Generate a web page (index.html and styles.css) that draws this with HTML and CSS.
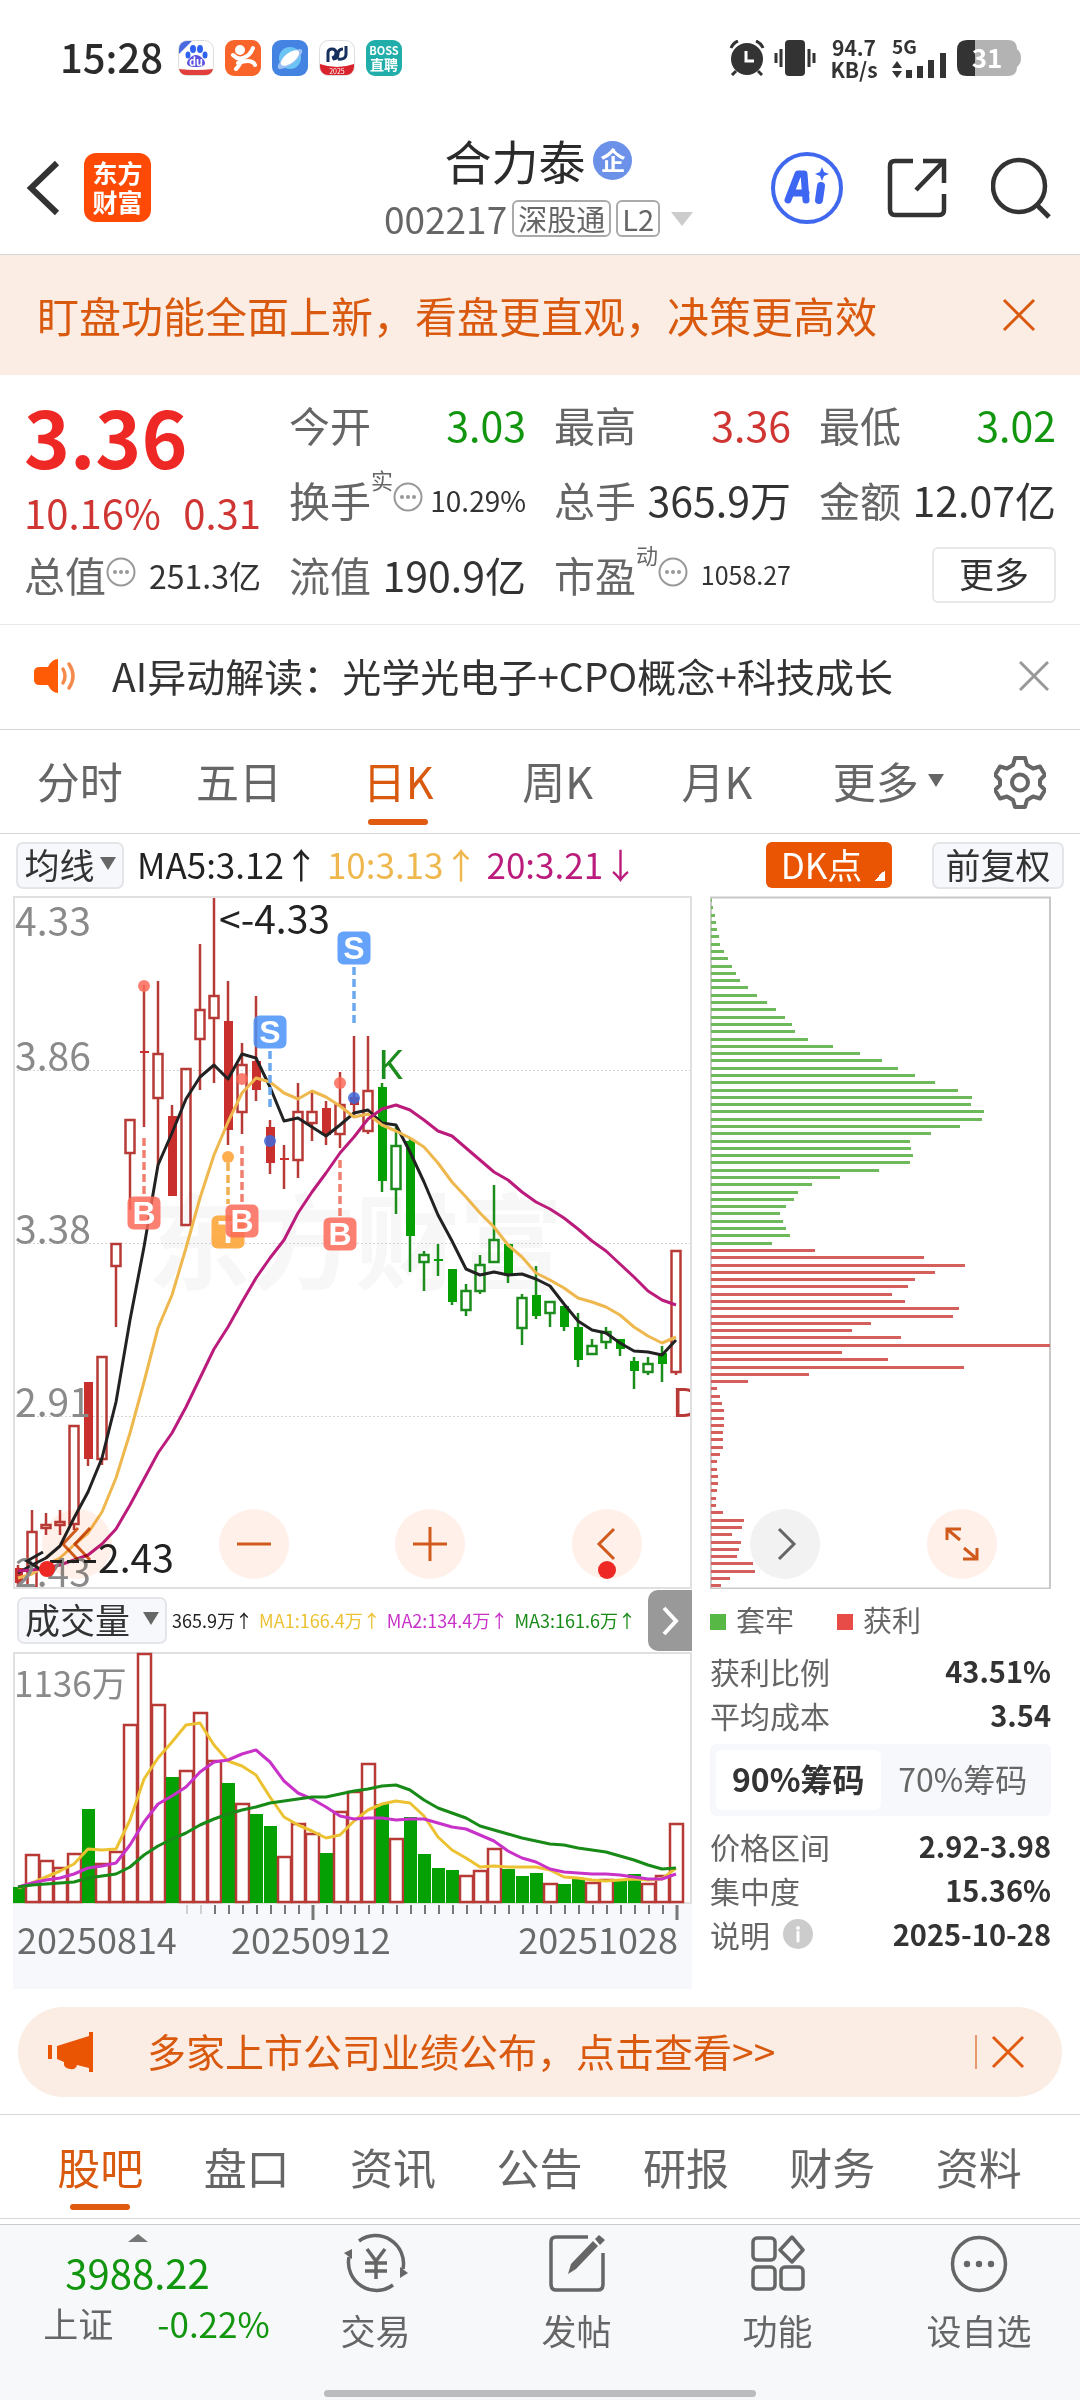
FILE: index.html
```html
<!DOCTYPE html>
<html lang="zh-CN">
<head>
<meta charset="utf-8">
<meta name="viewport" content="width=device-width, initial-scale=1">
<title>合力泰 002217</title>
<link rel="stylesheet" href="styles.css">
</head>
<body>
<div class="status">
  <span class="clock">15:28</span>
  <div class="status-apps">
    <svg viewBox="0 0 36 36"><rect x=".5" y=".5" width="35" height="35" rx="9" fill="#fff" stroke="#ddd"/><path d="M1 14V9a8 8 0 0 1 8-8h5z" fill="#4a6ae0"/><g fill="#2f62ee"><ellipse cx="15" cy="9" rx="3" ry="4"/><ellipse cx="22" cy="9" rx="3" ry="4"/><ellipse cx="10" cy="15" rx="2.500" ry="3.500"/><ellipse cx="27" cy="15" rx="2.500" ry="3.500"/></g><path d="M18 15c4 0 9 5 9 8s-4 4-9 4-9-1-9-4 5-8 9-8z" fill="#5b4fe0"/><text x="18" y="26" text-anchor="middle" class="t11 w">du</text><path d="M1 29q17 2 34 0a8 8 0 0 1-8 6H9a8 8 0 0 1-8-6z" fill="#e2403c"/></svg>
    <svg viewBox="0 0 36 36"><rect width="36" height="36" rx="9" fill="#f9642a"/><circle cx="15" cy="10" r="5" fill="#fff"/><path d="M8 15q5 5 10 3 7-2 10-10M17 18q-1 6-6 11M13 23q14-5 17 2" fill="none" stroke="#fff" stroke-width="4" stroke-linecap="round"/></svg>
    <svg viewBox="0 0 36 36"><rect width="36" height="36" rx="9" fill="#4583e2"/><circle cx="18" cy="18" r="11" fill="#6cc4f4"/><ellipse cx="18" cy="19" rx="5" ry="15" transform="rotate(52 18 19)" fill="#9cc0f4"/><ellipse cx="18" cy="18" rx="5" ry="11" transform="rotate(52 18 18)" fill="#fff"/></svg>
    <svg viewBox="0 0 36 36"><rect x=".5" y=".5" width="35" height="35" rx="9" fill="#fff" stroke="#ddd"/><path d="M9 22V13q0-4 4-4t4 4-4 5M14 19q5 0 5-5t5-5M19 19q8 1 8-5V6" fill="none" stroke="#18305e" stroke-width="3"/><path d="M1 24q17 6 34 0v3a8 8 0 0 1-8 8H9a8 8 0 0 1-8-8z" fill="#d8222c"/><text x="18" y="34" text-anchor="middle" class="t7 w">2025</text></svg>
    <svg viewBox="0 0 36 36"><rect width="36" height="36" rx="9" fill="#21aeaa"/><text x="18" y="15" text-anchor="middle" class="t11 w">BOSS</text><text x="18" y="30" text-anchor="middle" class="t14 w">直聘</text></svg>
  </div>
  <div class="status-right">
    <svg class="s36" viewBox="0 0 36 36"><circle cx="18" cy="19" r="16" fill="#333"/><path d="M17 11v10h8" fill="none" stroke="#fff" stroke-width="3"/><path d="M2 8q2-5 7-7M34 8q-2-5-7-7M7 31l-4 4M29 31l4 4" fill="none" stroke="#333" stroke-width="3"/></svg>
    <svg class="s42" viewBox="0 0 42 36"><rect x="11" width="20" height="36" rx="4" fill="#333"/><path d="M7 9v18M35 9v18M2 13v10M40 13v10" stroke="#333" stroke-width="3"/></svg>
    <span class="speed">94.7<br>KB/s</span>
    <svg class="signal" viewBox="0 0 56 44"><text x="0" y="18" class="t18 d">5G</text><path d="M0 32l5-7 5 7zM0 35l5 7 5-7z" fill="#333"/><path d="M17 42V34M28 42V30M39 42V24M51 42V17" stroke="#333" stroke-width="6"/></svg>
    <svg class="battery" viewBox="0 0 64 36"><path d="M10 0h41q9 0 9 9 4 3 4 9t-4 9q0 9-9 9H18V0z" fill="#b3b3b3"/><path d="M10 0h8v36h-8q-10 0-10-10V10Q0 0 10 0z" fill="#333"/><text x="30" y="28" text-anchor="middle" class="t26 w">31</text></svg>
  </div>
</div>

<header class="header">
  <div class="header-left">
    <button class="ghost" aria-label="返回"><svg width="34" height="56" viewBox="0 0 34 56"><path d="M31 3L5 28l26 25" fill="none" stroke="#333" stroke-width="6"/></svg></button>
    <a class="brand" href="#">东方<br>财富</a>
  </div>
  <div class="header-mid">
    <h1 class="stock-name">合力泰<span class="corp">企</span></h1>
    <div class="stock-code">002217<span class="tag">深股通</span><span class="tag">L2</span><svg width="22" height="14" viewBox="0 0 22 14"><path d="M0 0h22L11 14z" fill="#ccc"/></svg></div>
  </div>
  <div class="header-right">
    <button class="ghost" aria-label="Ai"><svg width="72" height="72" viewBox="0 0 72 72"><circle cx="36" cy="36" r="34" fill="none" stroke="#4068ee" stroke-width="4"/><path d="M17 48L27 22h6l2 26M21 41h14" fill="none" stroke="#3d66f2" stroke-width="7" stroke-linecap="round" stroke-linejoin="round"/><path d="M50 34L48 48" stroke="#3d66f2" stroke-width="8" stroke-linecap="round"/><path d="M51 15l2 5 5 2-5 2-2 5-2-5-5-2 5-2z" fill="#3d66f2"/></svg></button>
    <button class="ghost" aria-label="分享"><svg width="60" height="60" viewBox="0 0 60 60"><path d="M26 3H8Q3 3 3 8v43q0 6 5 6h44q5 0 5-5V36M36 3h21v22M56 4L29 32" fill="none" stroke="#333" stroke-width="4.500"/></svg></button>
    <button class="ghost" aria-label="搜索"><svg width="60" height="62" viewBox="0 0 60 62"><circle cx="28" cy="29" r="26" fill="none" stroke="#333" stroke-width="4.500"/><path d="M46 48l12 12" stroke="#333" stroke-width="5"/></svg></button>
  </div>
</header>

<div class="promo">
  <a class="promo-text" href="#">盯盘功能全面上新，看盘更直观，决策更高效</a>
  <button class="ghost" aria-label="关闭"><svg width="34" height="34" viewBox="0 0 34 34"><path d="M2 2l30 30M32 2L2 32" stroke="#d9590f" stroke-width="3"/></svg></button>
</div>

<section class="quote">
  <div class="price">
    <strong class="price-now">3.36</strong>
    <div class="price-diff"><span>10.16%</span><span>0.31</span></div>
  </div>
  <div class="cell"><span class="label">今开</span><span class="val green">3.03</span></div>
  <div class="cell"><span class="label">最高</span><span class="val red">3.36</span></div>
  <div class="cell"><span class="label">最低</span><span class="val green">3.02</span></div>
  <div class="cell"><span class="label">换手</span><span class="sup">实</span><svg class="more-dot"><use href="#dots"/></svg><span class="val v28">10.29%</span></div>
  <div class="cell"><span class="label">总手</span><span class="val">365.9万</span></div>
  <div class="cell"><span class="label">金额</span><span class="val">12.07亿</span></div>
  <div class="cell"><span class="label">总值</span><svg class="more-dot"><use href="#dots"/></svg><span class="val v32">251.3亿</span></div>
  <div class="cell"><span class="label">流值</span><span class="val">190.9亿</span></div>
  <div class="cell"><span class="label">市盈</span><span class="sup">动</span><svg class="more-dot"><use href="#dots"/></svg><span class="val v24">1058.27</span></div>
  <div class="cell"><button class="more-btn">更多</button></div>
  <svg width="0" height="0" class="defs"><symbol id="dots" viewBox="0 0 30 30"><circle cx="15" cy="15" r="13.500" fill="none" stroke="#999" stroke-width="2"/><circle cx="9" cy="15" r="2" fill="#999"/><circle cx="15" cy="15" r="2" fill="#999"/><circle cx="21" cy="15" r="2" fill="#999"/></symbol></svg>
</section>

<div class="insight">
  <svg width="46" height="36" viewBox="0 0 46 36"><path d="M24 1v34q-6 0-10-8H6q-6 0-6-5v-8q0-5 6-5h8q4-8 10-8z" fill="#ff5a05"/><path d="M29 11q4 7 0 14M35 6q8 12 0 24" fill="none" stroke="#f58a4c" stroke-width="3.500" stroke-linecap="round"/></svg>
  <a class="insight-text" href="#">AI异动解读：光学光电子+CPO概念+科技成长</a>
  <button class="ghost" aria-label="关闭"><svg width="30" height="30" viewBox="0 0 30 30"><path d="M1 1l28 28M29 1L1 29" stroke="#999" stroke-width="3"/></svg></button>
</div>

<nav class="periods">
  <a href="#">分时</a><a href="#">五日</a><a href="#" class="on">日K</a><a href="#">周K</a><a href="#">月K</a>
  <a href="#" class="wide">更多<svg width="16" height="13" viewBox="0 0 16 13"><path d="M0 0h16L8 13z" fill="#666"/></svg></a>
  <button class="ghost gear" aria-label="设置"><svg width="52" height="54" viewBox="0 0 52 54"><path d="M21 3h10l2 7 6 3.500 7-2 5 8.500-5 5v5l5 5-5 8.500-7-2-6 3.500-2 7H21l-2-7-6-3.500-7 2L1 35l5-5v-5l-5-5 5-8.500 7 2L19 10z" fill="none" stroke="#666" stroke-width="4" stroke-linejoin="round"/><circle cx="26" cy="27.500" r="8" fill="none" stroke="#666" stroke-width="4"/></svg></button>
</nav>

<div class="tools">
  <button class="chip ma-btn">均线<svg width="16" height="13" viewBox="0 0 16 13"><path d="M0 0h16L8 13z" fill="#666"/></svg></button>
  <div class="ma"><span>MA5:3.12↑</span><span class="gold">10:3.13↑</span><span class="plum">20:3.21↓</span></div>
  <button class="dk">DK点</button>
  <button class="chip adj-btn">前复权</button>
</div>

<main class="charts">
  <div class="col">
    <div class="panel">
      <svg id="kline" class="plot" viewBox="13 896 679 693"></svg>
      <div class="pad pad-k">
        <button class="round" aria-label="最早"><svg viewBox="0 0 34 34"><path d="M18 1L3 17l15 16M30 1L15 17l15 16" /></svg></button>
        <button class="round" aria-label="缩小"><svg viewBox="0 0 34 34"><path d="M0 17h34"/></svg></button>
        <button class="round" aria-label="放大"><svg viewBox="0 0 34 34"><path d="M0 17h34M17 0v34"/></svg></button>
        <button class="round dotted" aria-label="向左"><svg viewBox="0 0 34 34"><path d="M24 2L9 17l15 15"/></svg></button>
      </div>
    </div>
    <div class="vol-head">
      <button class="chip vol-btn">成交量<svg width="16" height="13" viewBox="0 0 16 13"><path d="M0 0h16L8 13z" fill="#666"/></svg></button>
      <div class="vol-ma"><span>365.9万↑</span><span class="v-gold">MA1:166.4万↑</span><span class="v-purple">MA2:134.4万↑</span><span class="v-green">MA3:161.6万↑</span></div>
      <button class="next" aria-label="下一个"><svg width="18" height="30" viewBox="0 0 18 30"><path d="M3 2l12 13L3 28" fill="none" stroke="#fff" stroke-width="4"/></svg></button>
    </div>
    <svg id="volume" class="plot" viewBox="13 1652 679 337"></svg>
  </div>
  <div class="col">
    <div class="panel">
      <svg id="chips" class="plot" viewBox="710 896 341 693"></svg>
      <div class="pad pad-c">
        <button class="round grey" aria-label="向右"><svg viewBox="0 0 34 34"><path d="M11 2l15 15-15 15"/></svg></button>
        <button class="round" aria-label="全屏"><svg viewBox="0 0 34 34"><path d="M2 13V2h14M2 2l13 11M32 21v11H18M32 32L19 21"/></svg></button>
      </div>
    </div>
    <div class="legend"><span class="key"><i class="sq g"></i>套牢</span><span class="key"><i class="sq r"></i>获利</span></div>
    <div class="fact"><span>获利比例</span><b>43.51%</b></div>
    <div class="fact"><span>平均成本</span><b>3.54</b></div>
    <div class="seg"><button class="seg-on">90%筹码</button><button>70%筹码</button></div>
    <div class="fact"><span>价格区间</span><b>2.92-3.98</b></div>
    <div class="fact"><span>集中度</span><b>15.36%</b></div>
    <div class="fact"><span>说明<svg class="info" viewBox="0 0 30 30"><circle cx="15" cy="15" r="15" fill="#ccc"/><circle cx="15" cy="9" r="2" fill="#fff"/><path d="M15 13v9" stroke="#fff" stroke-width="3" stroke-linecap="round"/></svg></span><b>2025-10-28</b></div>
  </div>
</main>

<div class="notice">
  <svg width="46" height="40" viewBox="0 0 46 40"><path d="M2 13v14" stroke="#ea5504" stroke-width="4"/><path d="M9 14L41 4V0h4v40h-4v-4l-12-3q-1 5-7 4-7-1-6-7l-7-3z" fill="#ea5504"/></svg>
  <a class="notice-text" href="#">多家上市公司业绩公布，点击查看&gt;&gt;</a>
  <button class="ghost notice-x" aria-label="关闭"><svg width="34" height="34" viewBox="0 0 34 34"><path d="M2 2l30 30M32 2L2 32" stroke="#e05a10" stroke-width="3"/></svg></button>
</div>

<nav class="sections">
  <a href="#" class="on">股吧</a><a href="#">盘口</a><a href="#">资讯</a><a href="#">公告</a><a href="#">研报</a><a href="#">财务</a><a href="#">资料</a>
</nav>

<footer class="dock">
  <a class="index" href="#">
    <svg width="20" height="8" viewBox="0 0 20 8"><path d="M0 8h20L10 0z" fill="#777"/></svg>
    <span class="index-val">3988.22</span>
    <span class="index-row"><span>上证</span><span class="green">-0.22%</span></span>
  </a>
  <a class="act" href="#"><svg width="66" height="60" viewBox="0 0 66 60"><path d="M16 8A28 28 0 0 1 60 36M50 52A28 28 0 0 1 6 24" fill="none" stroke="#666" stroke-width="3.500"/><path d="M1 20l8-4v10zM65 40l-8 5V34z" fill="#666"/><path d="M24 16l9 12 9-12M22 30h22M22 38h22M33 28v18" fill="none" stroke="#666" stroke-width="3.500"/></svg>交易</a>
  <a class="act" href="#"><svg width="58" height="60" viewBox="0 0 58 60"><path d="M40 4H8Q3 4 3 9v42q0 6 5 6h42q5 0 5-6V20" fill="none" stroke="#666" stroke-width="3.500"/><path d="M20 41l3-10L45 8l5 5-22 23zM47 6l4-4 6 5-5 5z" fill="#666"/></svg>发帖</a>
  <a class="act" href="#"><svg width="54" height="60" viewBox="0 0 54 60"><g fill="none" stroke="#666" stroke-width="3.500"><rect x="2" y="5" width="22" height="22" rx="4"/><rect x="2" y="34" width="22" height="22" rx="4"/><rect x="30" y="34" width="22" height="22" rx="4"/><path d="M41 4l11 13-11 12-12-12z" stroke-linejoin="round"/></g></svg>功能</a>
  <a class="act" href="#"><svg width="58" height="60" viewBox="0 0 58 60"><circle cx="29" cy="31" r="26.500" fill="none" stroke="#666" stroke-width="3.500"/><circle cx="17" cy="31" r="3.200" fill="#666"/><circle cx="29" cy="31" r="3.200" fill="#666"/><circle cx="41" cy="31" r="3.200" fill="#666"/></svg>设自选</a>
  <div class="home-bar"></div>
</footer>
<script src="charts.js"></script>
</body>
</html>
```
FILE: styles.css
```css
* { box-sizing: border-box; }
body {
  margin: 0;
  background: #fff;
  color: #333;
  font-family: "Noto Sans CJK SC", sans-serif;
  font-size: 35px;
  line-height: 1;
}
svg { display: block; flex: none; }
a { color: inherit; text-decoration: none; }
button {
  margin: 0;
  padding: 0;
  border: 0;
  background: none;
  color: inherit;
  font: inherit;
  white-space: nowrap;
  cursor: pointer;
}
.ghost { display: flex; align-items: center; justify-content: center; flex: none; }
.green { color: #12960f; }
.red { color: #cf3532; }
.defs { position: absolute; }

/* status bar */
.status { display: flex; align-items: center; height: 115px; padding: 0 59px 0 60px; }
.clock { width: 118px; padding-bottom: 3px; font-size: 40px; font-weight: 500; color: #2b2b2b; }
.status-apps { display: flex; gap: 11px; }
.status-apps svg { width: 36px; height: 36px; }
.status-right { display: flex; align-items: center; gap: 9px; margin-left: auto; }
.s36 { width: 36px; height: 36px; }
.s42 { width: 42px; height: 36px; }
.speed { width: 58px; font-size: 21px; line-height: 22px; font-weight: 700; text-align: center; }
.signal { width: 56px; height: 44px; overflow: visible; }
.battery { width: 64px; height: 36px; overflow: visible; }
.t7 { font-size: 7px; }
.t11 { font-size: 11px; font-weight: 700; }
.t14 { font-size: 14px; font-weight: 700; }
.t18 { font-size: 19px; font-weight: 700; }
.t26 { font-size: 26px; font-weight: 700; }
.w { fill: #fff; }
.d { fill: #333; }

/* header */
.header {
  display: grid;
  grid-template-columns: 1fr auto 1fr;
  align-items: center;
  height: 140px;
  padding: 6px 29px 0 26px;
  border-bottom: 1px solid #d6d6d6;
}
.header-left { display: flex; align-items: center; gap: 24px; }
.header-right { display: flex; align-items: center; justify-content: flex-end; gap: 44px; }
.brand {
  width: 67px;
  padding: 5px 0 6px;
  border-radius: 12px;
  background: #ff4a05;
  color: #fff;
  font-size: 25px;
  font-weight: 700;
  line-height: 29px;
  text-align: center;
}
.header-mid { display: flex; flex-direction: column; align-items: center; gap: 18px; }
.stock-name { display: flex; align-items: center; gap: 8px; margin: 0; font-size: 47px; font-weight: 400; line-height: 44px; color: #2b2b2b; }
.corp {
  width: 39px;
  height: 39px;
  border-radius: 50%;
  background: #6b92e8;
  color: #fff;
  font-size: 25px;
  font-weight: 700;
  line-height: 36px;
  text-align: center;
}
.stock-code { display: flex; align-items: center; gap: 5px; font-size: 37px; color: #666; }
.tag { padding: 0 4px; border: 2px solid #aaa; border-radius: 6px; font-size: 29px; line-height: 33px; }
.stock-code svg { margin-left: 6px; }

/* promo */
.promo { display: flex; align-items: center; justify-content: space-between; height: 120px; padding: 0 44px 1px 37px; background: #fcede4; }
.promo-text { font-size: 42px; color: #d9590f; }

/* quote */
.quote {
  display: grid;
  grid-template-columns: repeat(4, 1fr);
  grid-auto-rows: 75px;
  column-gap: 28px;
  padding: 12px 24px 12px 24px;
  border-bottom: 1px solid #eaeaea;
}
.price { grid-row: span 2; display: flex; flex-direction: column; gap: 15px; padding-top: 9px; }
.price-now { font-size: 78px; color: #ee2824; }
.price-diff { display: flex; justify-content: space-between; font-size: 40px; line-height: 46px; color: #cf3532; }
.cell { display: flex; align-items: center; white-space: nowrap; }
.label { font-size: 41px; color: #666; }
.val { margin-left: auto; font-size: 41px; }
.v32 { font-size: 32px; }
.v28 { font-size: 28px; }
.v24 { font-size: 25px; }
.sup { margin-bottom: 42px; font-size: 22px; color: #666; }
.more-dot { width: 30px; height: 30px; margin-bottom: 6px; }
.more-btn { margin-left: auto; width: 124px; height: 56px; padding-bottom: 4px; border: 2px solid #e8e8e8; border-radius: 6px; font-size: 35px; }

/* insight */
.insight { display: flex; align-items: center; height: 105px; padding: 0 31px 2px 34px; border-bottom: 1px solid #d6d6d6; }
.insight-text { flex: 1; padding: 0 0 2px 32px; font-size: 39px; }

/* period tabs */
.periods { display: flex; height: 104px; padding-right: 20px; border-bottom: 1px solid #d6d6d6; color: #666; font-size: 43px; }
.periods a { display: flex; align-items: center; justify-content: center; flex: 159 0 0; padding-bottom: 2px; }
.periods .wide { flex: 183 0 0; gap: 9px; }
.gear { flex: 80 0 0; }
.periods .on, .sections .on { position: relative; color: #d9590f; }
.on::after {
  content: "";
  position: absolute;
  bottom: 8px;
  left: 50%;
  width: 60px;
  height: 6px;
  margin-left: -30px;
  border-radius: 3px;
  background: #e05a10;
}

/* chart toolbar */
.tools { display: flex; align-items: center; height: 62px; padding: 0 16px; }
.chip {
  display: flex;
  align-items: center;
  justify-content: center;
  gap: 5px;
  flex: none;
  height: 47px;
  padding-bottom: 4px;
  border: 2px solid #e3e5e9;
  border-radius: 7px;
  background: #f7f8fb;
}
.ma-btn { width: 108px; }
.adj-btn { width: 132px; }
.ma { display: flex; gap: 8px; flex: 1; padding: 0 0 3px 13px; color: #222; white-space: nowrap; }
.gold { color: #efb84e; }
.plum { color: #bb1c7c; }
.dk {
  width: 126px;
  height: 46px;
  margin-right: 40px;
  padding: 0 15px 4px 0;
  border-radius: 6px;
  background: linear-gradient(135deg, transparent 50%, #fff 50%) right 7px bottom 7px / 11px 11px no-repeat, #ea5504;
  color: #fff;
}

/* charts */
.charts { display: grid; grid-template-columns: 679fr 341fr; column-gap: 18px; padding: 0 29px 0 13px; }
.panel { position: relative; }
.plot { width: 100%; height: auto; }
.pad { position: absolute; bottom: 10px; display: flex; justify-content: space-between; }
.pad-k { left: 29px; right: 50px; mix-blend-mode: multiply; }
.pad-c { left: 40px; right: 54px; }
.round { position: relative; display: flex; align-items: center; justify-content: center; width: 70px; height: 70px; border-radius: 50%; background: #fff0e9; }
.round svg { width: 34px; height: 34px; fill: none; stroke: #d05a1c; stroke-width: 3; }
.round.grey { background: #f2f2f2; }
.round.grey svg { stroke: #666; }
.dotted::after { content: ""; position: absolute; bottom: 0; left: 26px; width: 18px; height: 18px; border-radius: 50%; background: #ee2824; }

.vol-head { display: flex; align-items: center; height: 63px; padding-left: 4px; }
.vol-btn { width: 150px; gap: 13px; }
.vol-ma { display: flex; justify-content: space-between; flex: 1; padding: 0 12px 2px 5px; font-size: 18px; white-space: nowrap; color: #222; }
.v-gold { color: #ecc232; }
.v-purple { color: #c832c8; }
.v-green { color: #188a18; }
.next { display: flex; align-items: center; justify-content: center; flex: none; width: 44px; height: 61px; border-radius: 10px 0 0 10px; background: #999; }

.grid { stroke: #d4d4d4; stroke-width: 1; stroke-dasharray: 2 2; }
.axis { font-size: 39px; fill: #8a8a8a; }
.axis-small { font-size: 35px; fill: #8a8a8a; }
.mark { font-size: 39px; fill: #222; }
.date { font-size: 36px; fill: #6a6a6a; }
.watermark { font-size: 104px; font-weight: 700; fill: #f7f7f7; }
.flag { font-family: "Liberation Sans", sans-serif; font-size: 32px; font-weight: 700; fill: #fff; text-anchor: middle; }
.signal-text { font-family: "Noto Sans", sans-serif; font-size: 40px; }

.legend { display: flex; gap: 43px; padding-top: 16px; height: 61px; font-size: 29px; color: #666; }
.key { display: flex; gap: 10px; }
.sq { width: 16px; height: 16px; margin-top: 9px; }
.sq.g { background: #58b845; }
.sq.r { background: #e84c48; }
.fact { display: flex; align-items: center; justify-content: space-between; height: 44px; padding-bottom: 3px; font-size: 30px; color: #666; }
.fact span { display: flex; align-items: center; gap: 13px; }
.fact b { font-size: 29px; color: #333; }
.info { width: 30px; height: 30px; }
.seg { display: flex; height: 72px; margin: 6px 0 9px; padding: 6px; border-radius: 6px; background: #f7f8fb; font-size: 32px; color: #666; }
.seg button { flex: 1; padding-bottom: 4px; border-radius: 6px; }
.seg .seg-on { background: #fff; color: #333; font-weight: 700; }

/* notice */
.notice { display: flex; align-items: center; height: 90px; margin: 18px 18px 17px; padding: 0 37px 0 30px; border-radius: 45px; background: #fcede4; color: #d9590f; }
.notice-text { flex: 1; padding: 0 0 4px 53px; font-size: 39px; }
.notice-x { padding-left: 14px; border-left: 2px solid #e5986b; }

/* section tabs */
.sections { display: flex; height: 105px; padding: 0 28px 0 27px; border-top: 1px solid #d6d6d6; border-bottom: 1px solid #d6d6d6; color: #666; font-size: 43px; }
.sections a { display: flex; align-items: center; justify-content: center; flex: 1; }

/* dock */
.dock {
  display: grid;
  grid-template-columns: 275fr 201fr 201fr 201fr 202fr;
  height: 176px;
  margin-top: 5px;
  border-top: 1px solid #ccc;
  background: #f7f8fa;
  color: #666;
  position: relative;
}
.index { display: flex; flex-direction: column; align-items: center; padding-top: 9px; }
.index-val { margin: 9px 0 5px; font-size: 40px; line-height: 42px; color: #12960f; }
.index-row { display: flex; gap: 44px; padding-left: 38px; line-height: 50px; }
.act { display: flex; flex-direction: column; align-items: center; padding-top: 8px; gap: 19px; }
.home-bar { position: absolute; bottom: 3px; left: 30%; right: 30%; height: 7px; border-radius: 4px; background: #bbbcbe; }
```
FILE: charts.js
```js
var RED = '#b83a36', SOLID = '#c92f2d', GREEN = '#1c8c1c', FILL = '#04a004';
var COUNT = 48, STEP = 14, START = 18;

// kind, high, body top, body bottom, low (r/g hollow, R/G filled)
var candles = [
  ['R',1565,1568,1583,1590],['r',1510,1531,1587,1587],['r',1513,1524,1528,1535],['r',1510,1521,1525,1535],
  ['r',1425,1425,1524,1530],['R',1382,1382,1459,1466],['r',1356,1356,1459,1465],['r',1243,1243,1266,1327],
  ['r',1119,1119,1153,1210],['R',985,1051,1053,1127],['r',981,1053,1098,1165],['R',1105,1116,1196,1196],
  ['r',1068,1068,1225,1225],['r',944,1009,1039,1090],['r',896,995,1018,1083],['R',981,1021,1130,1145],
  ['r',1043,1064,1112,1134],['R',996,1061,1090,1101],['R',1120,1127,1163,1174],['R',1145,1158,1160,1189],
  ['r',1083,1111,1160,1178],['r',1092,1111,1123,1141],['R',1101,1108,1135,1145],['r',1072,1104,1134,1148],
  ['R',1036,1097,1105,1115],['r',1036,1090,1131,1134],['G',1083,1087,1181,1192],['g',1127,1145,1189,1214],
  ['G',1138,1141,1236,1272],['g',1251,1254,1262,1291],['G',1244,1259,1261,1276],['G',1269,1269,1302,1305],
  ['g',1284,1290,1310,1316],['g',1255,1264,1291,1294],['g',1185,1239,1262,1262],['G',1244,1244,1275,1283],
  ['g',1294,1297,1328,1345],['G',1266,1295,1316,1319],['g',1301,1301,1313,1327],['G',1306,1306,1327,1331],
  ['G',1313,1327,1360,1367],['g',1339,1345,1354,1354],['g',1327,1331,1342,1349],['G',1339,1339,1349,1356],
  ['G',1357,1361,1371,1389],['g',1357,1363,1372,1375],['G',1346,1353,1364,1382],['r',1250,1250,1372,1375]
];
var ma5 = [1573,1565,1558,1546,1518,1492,1458,1402,1320,1247,1165,1133,1099,1077,1065,1079,1054,1058,1087,1121,1118,1127,1136,1125,1113,1110,1123,1125,1152,1182,1215,1241,1269,1275,1272,1275,1274,1279,1286,1304,1321,1330,1333,1343,1351,1352,1355,1340];
var ma10 = [1578,1574,1565,1558,1545,1533,1512,1478,1433,1382,1328,1295,1248,1198,1155,1122,1093,1078,1082,1093,1099,1091,1097,1106,1117,1114,1125,1131,1138,1147,1163,1182,1197,1213,1227,1245,1257,1273,1280,1288,1298,1302,1307,1315,1327,1336,1343,1337];
var ma20 = [1571,1570,1568,1565,1560,1555,1544,1529,1505,1479,1453,1433,1407,1378,1349,1327,1302,1278,1258,1240,1213,1192,1173,1153,1137,1119,1109,1105,1110,1120,1131,1136,1148,1160,1172,1180,1192,1202,1209,1218,1229,1241,1251,1264,1277,1291,1300,1305];

// volume series, in thirds of a pixel below the top of the volume header
var bars = [920,821,840,860,819,686,848,813,432,220,371,591,569,397,540,610,670,703,738,827,728,758,818,693,632,548,672,773,710,823,865,870,884,870,803,867,887,878,908,911,895,906,898,903,881,908,884,729];
var down = [0,5,11,15,17,18,22,26,28,29,30,31,35,36,37,39,40,43,44];
var v1 = [925,908,890,873,853,806,810,806,720,598,535,485,436,430,495,543,558,585,650,710,735,753,774,765,722,690,672,664,668,708,770,810,833,862,858,860,862,862,870,890,895,899,903,901,897,900,898,863];
var v2 = [920,910,900,893,883,865,858,850,795,725,672,648,620,575,547,540,522,511,545,602,638,656,680,708,718,713,713,720,716,716,730,740,748,765,782,812,835,846,867,876,879,882,883,885,891,896,898,883];
var v3 = [920,915,912,909,906,893,889,883,860,825,797,778,758,735,716,703,690,680,670,664,656,652,651,643,634,627,618,615,630,660,685,698,715,738,750,763,774,783,792,796,804,811,816,827,839,855,867,865];

// chip distribution: bar lengths by price level, trapped first, then in profit
var trapped = [3,7,11,15,19,24,28,40,52,64,76,88,112,139,169,196,223,243,253,292,366,447,514,562,613,672,742,783,781,820,814,747,660,598,600,607,597,505,388,304,261,250,226,208,215,226,238,183];
var profit = [313,639,763,671,612,592,544,583,745,727,480,422,570,1018,394,532,758,295,112,19,26,34,38,40,39,35,37,35,26,19,18,22,22,19,15,16,37,98,92,64,91,85,79,125,132,58,30];

function x(i) { return START + STEP * i; }
function volY(v) { return Math.round(1580 + v / 3); }
function rect(l, t, w, h, attrs) { return '<rect x="' + l + '" y="' + t + '" width="' + w + '" height="' + h + '" ' + attrs + '/>'; }
function seg(x1, y1, x2, y2, color, w, extra) {
  return '<path d="M' + x1 + ' ' + y1 + 'L' + x2 + ' ' + y2 + '" stroke="' + color + '" stroke-width="' + w + '" ' + (extra || '') + '/>';
}
function curve(ys, color) {
  return '<polyline fill="none" stroke="' + color + '" stroke-width="3" stroke-linejoin="round" points="' +
    ys.map(function (y, i) { return x(i) + ',' + y; }).join(' ') + '"/>';
}
function label(lx, y, cls, str, extra) { return '<text x="' + lx + '" y="' + y + '" class="' + cls + '" ' + (extra || '') + '>' + str + '</text>'; }
function flag(i, cy, letter, color) {
  return rect(x(i) - 16.5, cy - 16.5, 33, 33, 'rx="6" fill="' + color + '" fill-opacity=".85"') + label(x(i), cy + 11, 'flag', letter);
}
function dot(i, cy, color) { return '<circle cx="' + x(i) + '" cy="' + cy + '" r="6" fill="' + color + '" fill-opacity=".85"/>'; }
function dash(i, y1, y2, color) { return seg(x(i), y1, x(i), y2, color, 3.5, 'stroke-dasharray="8 4"'); }

var k = label(147, 1282, 'watermark', '东方财富');
[1070.5, 1243.5, 1416.5].forEach(function (y) { k += '<path class="grid" d="M13 ' + y + 'H692"/>'; });
candles.forEach(function (c, i) {
  var hollow = c[0] === 'r' || c[0] === 'g', up = c[0].toLowerCase() === 'r', line = up ? RED : GREEN;
  if (c[1] < c[2]) k += seg(x(i), c[1], x(i), c[2], line, 2.5);
  if (c[4] > c[3]) k += seg(x(i), c[3], x(i), c[4], line, 2.5);
  k += hollow ? rect(x(i) - 4.5, c[2] + 1, 9, c[3] - c[2] - 1, 'fill="none" stroke-width="2.5" stroke="' + line + '"')
              : rect(x(i) - 4, c[2], 9, c[3] - c[2], 'fill="' + (up ? SOLID : FILL) + '"');
});
var CORAL = '#fb6a58', BLUE = '#4a92f8', AMBER = '#fda02e';
k += curve(ma5, '#222') + curve(ma10, '#efb84e') + curve(ma20, '#bb1c7c');
k += dash(9, 1138, 1197, '#f08070') + dash(15, 1163, 1204, '#f0b050') + dash(16, 1146, 1204, '#f08070') + dash(23, 1160, 1218, '#f08070');
k += dash(18, 1051, 1107, '#6ca8f0') + dash(24, 967, 1025, '#6ca8f0');
k += dot(9, 986, CORAL) + dot(15, 1157, AMBER) + dot(16, 1079, CORAL) + dot(18, 1141, '#3c68dc') + dot(23, 1083, CORAL) + dot(24, 1098, '#3c68dc');
k += flag(9, 1213, 'B', CORAL) + flag(15, 1232, 'T', AMBER) + flag(16, 1221, 'B', CORAL) + flag(23, 1234, 'B', CORAL);
k += flag(18, 1032, 'S', BLUE) + flag(24, 948, 'S', BLUE);
k += label(378, 1079, 'signal-text', 'K', 'fill="' + GREEN + '"') + label(672, 1417, 'signal-text', 'D', 'fill="' + RED + '"');
k += label(15, 936, 'axis', '4.33') + label(15, 1071, 'axis', '3.86') + label(15, 1244, 'axis', '3.38') + label(15, 1417, 'axis', '2.91') + label(15, 1587, 'axis', '2.43');
k += label(219, 934, 'mark', '&lt;-4.33') + label(98, 1573, 'mark', '2.43');
k += '<path d="M43 1552L27 1561L43 1571M50 1561.5h12M67 1561.5h12M84 1561.5h12" fill="none" stroke="#222" stroke-width="3"/>';
k += '<circle cx="47" cy="1569" r="8" fill="#ee2824"/>';
k += rect(14, 897, 677, 691, 'fill="none" stroke="#e0e0e0" stroke-width="2"');
document.getElementById('kline').innerHTML = k;

var v = rect(13, 1904, 679, 85, 'fill="#f7f8fb"') + rect(14, 1653, 677, 250, 'fill="#fff" stroke="#e0e0e0" stroke-width="2"');
v += label(14, 1697, 'axis-small', '1136万');
bars.forEach(function (b, i) {
  var t = volY(b);
  v += down.indexOf(i) >= 0 ? rect(x(i) - 6, t, 13, 1903 - t, 'fill="' + FILL + '"')
                            : rect(x(i) - 6, t + 1, 13, 1901 - t, 'fill="#fff" stroke-width="2.5" stroke="' + RED + '"');
});
v += curve(v1.map(volY), '#ecc232') + curve(v2.map(volY), '#c832c8') + curve(v3.map(volY), '#188a18');
for (var i = 12; i < COUNT; i++) {
  var major = i === 21 || i === 47;
  v += seg(x(i) + 1, 1905, x(i) + 1, major ? 1920 : 1914, i < 14 ? '#d0d0d0' : '#777', major ? 3 : 2);
}
v += label(17, 1954, 'date', '20250814') + label(231, 1954, 'date', '20250912') + label(678, 1954, 'date', '20251028', 'text-anchor="end"');
document.getElementById('volume').innerHTML = v;

var c = rect(711, 897.5, 339, 691, 'fill="none" stroke="#c8c8c8" stroke-width="2"');
trapped.concat(profit).forEach(function (len, i) {
  c += rect(711, Math.round(900 + i * 7.29 - 1), Math.round(len / 3), 3, 'fill="' + (i < trapped.length ? '#6db95c' : '#d45f5b') + '"');
});
document.getElementById('chips').innerHTML = c;
```
